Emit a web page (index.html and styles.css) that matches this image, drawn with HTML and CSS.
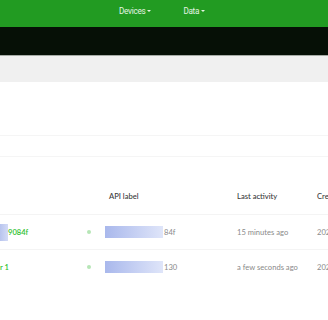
FILE: index.html
```html
<!DOCTYPE html>
<html>
<head>
<meta charset="utf-8">
<link rel="stylesheet" href="styles.css">
</head>
<body>
<div class="page">
  <nav class="nav">
    <span class="nav-item">Devices<span class="caret"></span></span>
    <span class="nav-item">Data<span class="caret"></span></span>
  </nav>
  <div class="subbar"></div>
  <div class="crumb"></div>
  <div class="panel"></div>
  <div class="panel2"></div>
  <div class="table">
    <div class="row head">
      <div class="c1"></div>
      <div class="c2"></div>
      <div class="c3 label-head">API label</div>
      <div class="c4">Last activity</div>
      <div class="c5">Cre</div>
    </div>
    <div class="row">
      <div class="c1 name"><span class="hl"></span>9084f</div>
      <div class="c2"><span class="dot"></span></div>
      <div class="c3"><span class="bar"></span><span class="muted">84f</span></div>
      <div class="c4 muted">15 minutes ago</div>
      <div class="c5 muted">202</div>
    </div>
    <div class="row">
      <div class="c1 name">r 1</div>
      <div class="c2"><span class="dot"></span></div>
      <div class="c3"><span class="bar"></span><span class="muted">130</span></div>
      <div class="c4 muted">a few seconds ago</div>
      <div class="c5 muted">202</div>
    </div>
  </div>
</div>
</body>
</html>
```
FILE: styles.css
```css
html, body {
  margin: 0;
  padding: 0;
  background: #ffffff;
}
.page {
  width: 328px;
  height: 320px;
  overflow: hidden;
  font-family: Lato, "Open Sans", sans-serif;
}
.nav {
  height: 27px;
  background: #229b22;
  display: flex;
  align-items: center;
  padding-left: 119px;
  gap: 32px;
  box-sizing: border-box;
  padding-bottom: 6px;
}
.nav-item {
  color: #e4f4e2;
  font-family: Roboto, sans-serif;
  font-size: 8.2px;
  letter-spacing: -0.3px;
  display: flex;
  align-items: center;
}
.caret {
  display: inline-block;
  width: 0;
  height: 0;
  margin-left: 2px;
  border-left: 2px solid transparent;
  border-right: 2px solid transparent;
  border-top: 2.5px solid #e4f4e2;
}
.subbar {
  height: 28px;
  background: #061006;
  border-bottom: 1px solid #a6aca6;
}
.crumb {
  height: 26px;
  background: #f0f0f0;
}
.panel {
  height: 53px;
  border-bottom: 1px solid #f5f5f5;
}
.panel2 {
  height: 20px;
  border-bottom: 1px solid #f5f5f5;
}
.table {
  display: flex;
  flex-direction: column;
}
.row {
  display: grid;
  grid-template-columns: 82px 23px 132px 80px 80px;
  height: 35px;
  align-items: center;
  border-top: 1px solid #f4f4f4;
  box-sizing: border-box;
  font-size: 7.6px;
  line-height: 12px;
  white-space: nowrap;
}
.row.head {
  border-top: none;
  height: 57px;
  align-items: end;
  padding-bottom: 12px;
  color: #3a3a3a;
  font-weight: 500;
}
.label-head {
  padding-left: 4px;
}
.c3 {
  display: flex;
  align-items: center;
}
.name {
  color: #2fbf2f;
  font-weight: 600;
  display: flex;
  align-items: center;
}
.hl {
  display: inline-block;
  width: 8px;
  height: 17px;
  background: linear-gradient(90deg, #b8c4ee, #d3dbf6);
}
.dot {
  display: block;
  width: 4px;
  height: 4px;
  margin-left: 5px;
  border-radius: 50%;
  background: #b6e6b6;
}
.bar {
  display: inline-block;
  width: 58px;
  height: 12px;
  background: linear-gradient(90deg, #a9b8ec, #dfe5f9);
  margin-right: 1px;
}
.muted {
  color: #8a8a8a;
}
```
